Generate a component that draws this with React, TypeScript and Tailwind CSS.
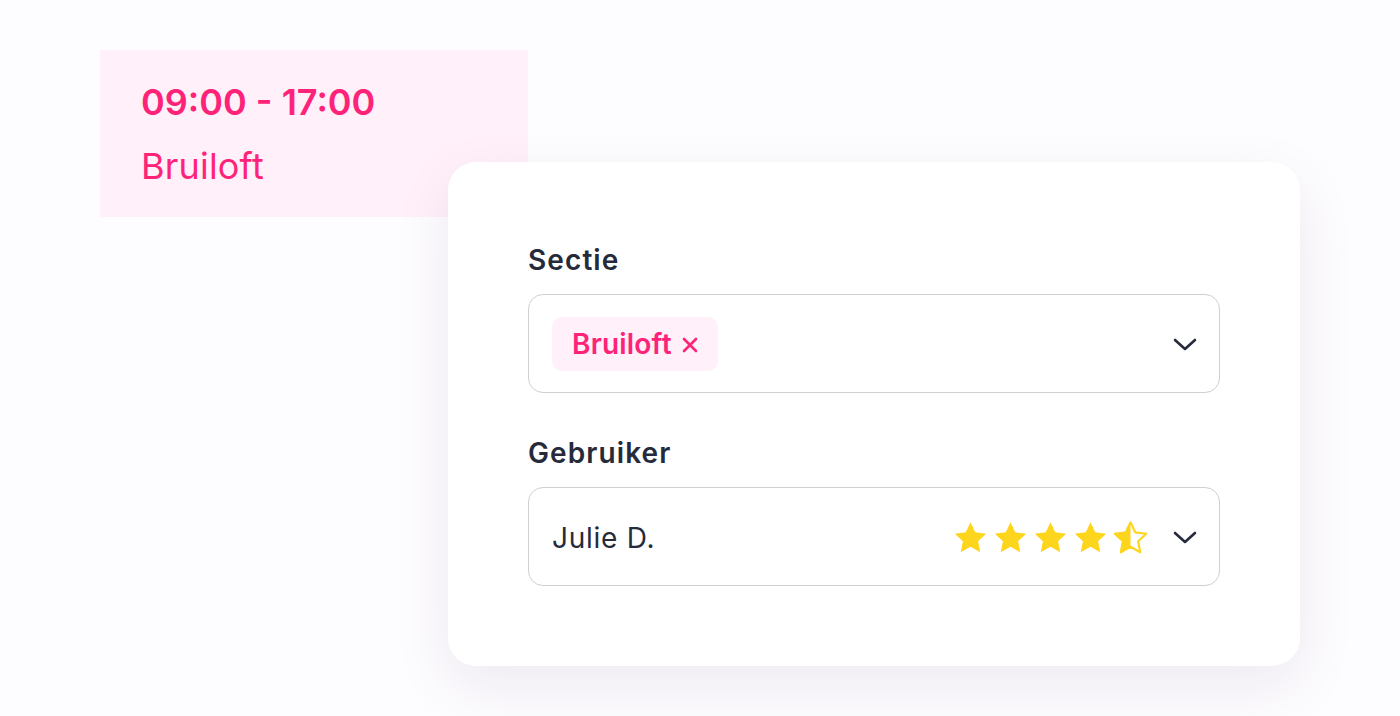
import React from "react";

const Star = ({ half = false }: { half?: boolean }) => (
  <svg width="37" height="35" viewBox="0 0 24 23" className="block">
    <defs>
      <clipPath id="lefthalf">
        <rect x="0" y="0" width="12" height="23" />
      </clipPath>
    </defs>
    {half ? (
      <>
        <path
          d="M12 1.5l3.1 6.6 7.2.9-5.3 5 1.4 7.2L12 17.6l-6.4 3.6 1.4-7.2-5.3-5 7.2-.9z"
          fill="none"
          stroke="#fdd51c"
          strokeWidth="1.4"
          strokeLinejoin="round"
        />
        <path
          d="M12 1.5l3.1 6.6 7.2.9-5.3 5 1.4 7.2L12 17.6l-6.4 3.6 1.4-7.2-5.3-5 7.2-.9z"
          fill="#fdd51c"
          clipPath="url(#lefthalf)"
        />
      </>
    ) : (
      <path
        d="M12 1.5l3.1 6.6 7.2.9-5.3 5 1.4 7.2L12 17.6l-6.4 3.6 1.4-7.2-5.3-5 7.2-.9z"
        fill="#fdd51c"
      />
    )}
  </svg>
);

const Chevron = () => (
  <svg width="24" height="24" viewBox="0 0 24 24" fill="none" className="block">
    <path d="M2 8l10 9 10-9" stroke="#262b3b" strokeWidth="2.6" strokeLinecap="round" strokeLinejoin="round" />
  </svg>
);

export default function App() {
  return (
    <div
      className="relative w-[1400px] h-[716px] bg-[#fdfcfe] overflow-hidden text-[#262b3b]"
      style={{ fontFamily: "Inter, 'Noto Sans', sans-serif" }}
    >
      <div className="ml-[100px] mt-[50px] w-[428px] h-[167px] bg-[#fff0f9] pl-[41px] pt-[27px] text-[#fe2378]">
        <div className="text-[36px] font-semibold leading-[50px] tracking-[0px]">09:00 - 17:00</div>
        <div className="text-[36px] font-normal leading-[50px] mt-[14px] tracking-[0.2px]">Bruiloft</div>
      </div>

      <div className="absolute left-[448px] top-[162px] w-[852px] h-[504px] bg-white rounded-[28px] shadow-[0_20px_60px_rgba(60,30,90,0.08)] px-[80px] pt-[80px]">
        <div className="text-[28px] font-semibold leading-[36px] mb-[16px] tracking-[1.1px]">Sectie</div>
        <div className="h-[99px] border border-[#cfcfd4] rounded-[15px] flex items-center pl-[23px] pr-[22px]">
          <div className="h-[54px] rounded-[10px] bg-[#fff0f9] px-[20px] flex items-center gap-[10px] text-[#fe2378] text-[28px] font-semibold tracking-[0.2px]">
            <span>Bruiloft</span>
            <svg width="16" height="16" viewBox="0 0 16 16" className="block mt-[2px]">
              <path d="M2 2l12 12M14 2L2 14" stroke="#fe2378" strokeWidth="2.6" strokeLinecap="round" />
            </svg>
          </div>
          <div className="ml-auto">
            <Chevron />
          </div>
        </div>

        <div className="text-[28px] font-semibold leading-[36px] mt-[42px] mb-[16px] tracking-[1.1px]">Gebruiker</div>
        <div className="h-[99px] border border-[#cfcfd4] rounded-[15px] flex items-center pl-[23px] pr-[22px]">
          <span className="text-[28px] font-normal tracking-[0.75px] mt-[3px]">Julie D.</span>
          <div className="ml-auto flex items-center gap-[3px] mt-[1px]">
            <Star />
            <Star />
            <Star />
            <Star />
            <Star half />
          </div>
          <div className="ml-[24px]">
            <Chevron />
          </div>
        </div>
      </div>
    </div>
  );
}
